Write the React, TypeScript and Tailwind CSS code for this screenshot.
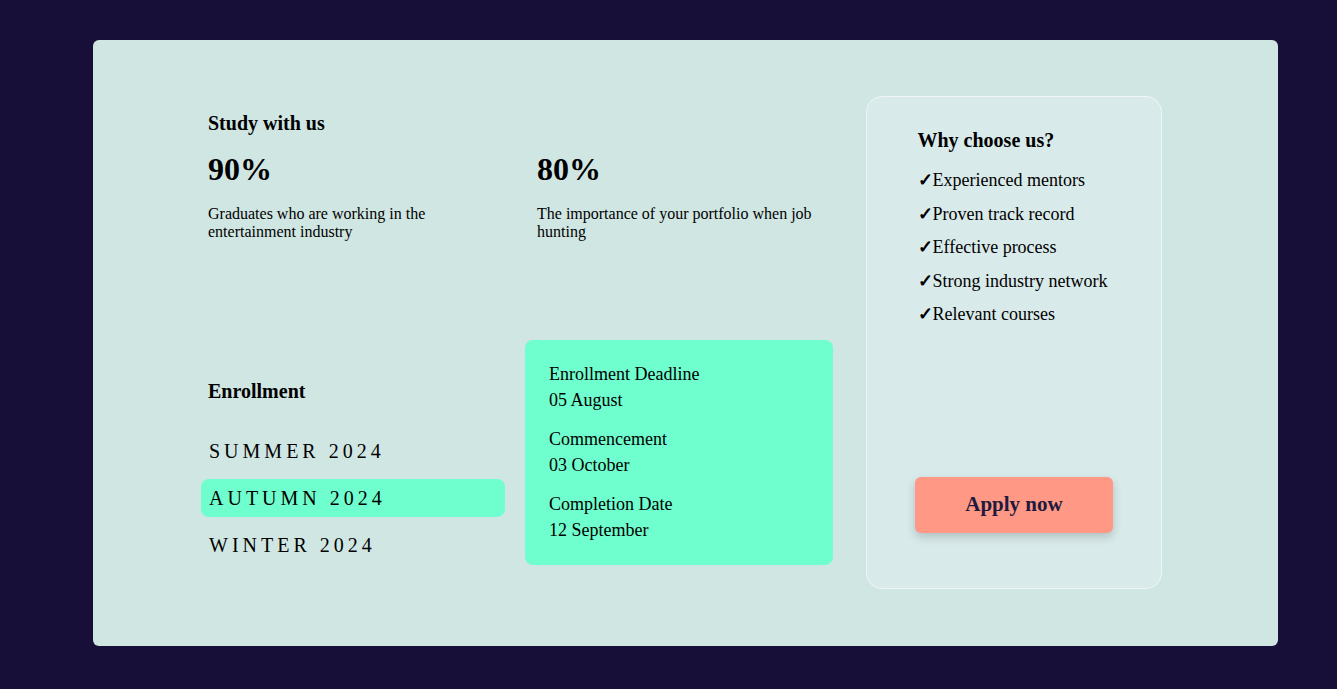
import React from 'react';

const seasons = ['SUMMER 2024', 'AUTUMN 2024', 'WINTER 2024'];

const dates = [
  { label: 'Enrollment Deadline', value: '05 August' },
  { label: 'Commencement', value: '03 October' },
  { label: 'Completion Date', value: '12 September' },
];

const reasons = [
  'Experienced mentors',
  'Proven track record',
  'Effective process',
  'Strong industry network',
  'Relevant courses',
];

const App: React.FC = () => {
  const active = 'AUTUMN 2024';

  return (
    <div
      className="min-h-screen bg-[#170f37] pt-10 pb-[43px] pl-[93px] pr-[59px] text-black"
      style={{ fontFamily: '"Liberation Serif", "Times New Roman", serif' }}
    >
      <div className="flex h-[606px] rounded-md bg-[#d0e6e3] pl-[108px] pt-14">
        {/* left area */}
        <div className="flex w-[632px] flex-col">
          <h2 className="pl-[7px] pt-4 text-[20px] font-bold leading-[23px]">Study with us</h2>
          <div className="mt-4 grid grid-cols-[304px_308px] gap-x-5">
            <div className="pl-[7px]">
              <div className="text-[32px] font-bold leading-[37px]">90%</div>
              <p className="mt-[17px] w-[240px] text-[16px] leading-[18px]">
                Graduates who are working in the entertainment industry
              </p>
            </div>
            <div className="pl-3">
              <div className="text-[32px] font-bold leading-[37px]">80%</div>
              <p className="mt-[17px] w-[285px] text-[16px] leading-[18px]">
                The importance of your portfolio when job hunting
              </p>
            </div>
          </div>

          <div className="mt-[99px] grid grid-cols-[304px_308px] gap-x-5">
            <div className="flex flex-col pt-10">
              <h3 className="pl-[7px] text-[20px] font-bold leading-[23px]">Enrollment</h3>
              <ul className="mt-[29px] flex flex-col gap-[9px]">
                {seasons.map(s => (
                  <li
                    key={s}
                    className={`flex h-[38px] items-center rounded-lg pl-2 text-[20px] tracking-[0.2em] ${
                      s === active ? 'bg-[#6ffecd]' : ''
                    }`}
                  >
                    {s}
                  </li>
                ))}
              </ul>
            </div>
            <div className="flex h-[225px] flex-col gap-[13px] rounded-lg bg-[#6ffecd] pl-6 pt-[21px]">
              {dates.map(d => (
                <div key={d.label} className="text-[18px] leading-[26px]">
                  <div>{d.label}</div>
                  <div>{d.value}</div>
                </div>
              ))}
            </div>
          </div>
        </div>

        {/* right card */}
        <div className="ml-[33px] flex h-[493px] w-[296px] flex-col items-center rounded-2xl border border-[#eef7f6] bg-[#d9eaea] pb-[55px] pt-[32px]">
          <div className="w-[193px]">
            <h3 className="text-[20px] font-bold leading-[23px]">Why choose us?</h3>
            <ul className="mt-[18px]">
              {reasons.map(r => (
                <li key={r} className="h-[33.6px] text-[18px] leading-[21px]">
                  <span className="font-bold">✓</span>
                  {r}
                </li>
              ))}
            </ul>
          </div>
          <button className="mt-auto h-[56px] w-[198px] rounded-md bg-[#ff9985] text-[21px] font-bold text-[#221a3e] shadow-[0_4px_10px_rgba(0,0,0,0.18)]">
            Apply now
          </button>
        </div>
      </div>
    </div>
  );
};

export default App;
